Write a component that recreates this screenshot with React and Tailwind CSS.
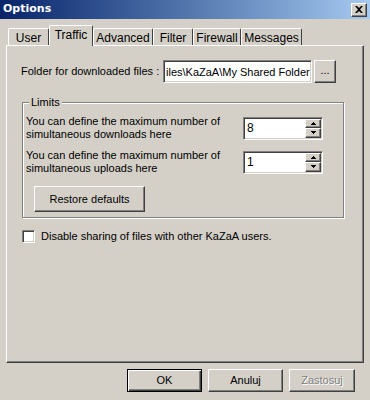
import { useState } from 'react';

const font = { fontFamily: '"Liberation Sans", Arial, sans-serif' };

// classic raised 3D border
const raised = 'border border-t-white border-l-white border-r-[#404040] border-b-[#404040] shadow-[inset_-1px_-1px_0_#808080,inset_1px_1px_0_#d4d0c8]';
const sunken = 'border border-t-[#808080] border-l-[#808080] border-r-white border-b-white shadow-[inset_1px_1px_0_#404040,inset_-1px_-1px_0_#d4d0c8]';

function Spinner({ value }) {
  return (
    <div className={`flex h-[23px] w-[80px] bg-white ${sunken}`}>
      <div className="flex-1 pl-[3px] pt-[2px] text-[12px] leading-[16px] text-black">{value}</div>
      <div className="flex flex-col py-[1px] pr-[1px]">
        <div className={`flex h-[10px] w-[16px] items-center justify-center bg-[#d4d0c8] ${raised}`}>
          <svg width="5" height="3" viewBox="0 0 5 3"><path d="M2 0h1v1h1v1h1v1H0V2h1V1h1z" fill="#000" /></svg>
        </div>
        <div className={`flex h-[10px] w-[16px] items-center justify-center bg-[#d4d0c8] ${raised}`}>
          <svg width="5" height="3" viewBox="0 0 5 3"><path d="M0 0h5v1H4v1H3v1H2V2H1V1H0z" fill="#000" /></svg>
        </div>
      </div>
    </div>
  );
}

export default function App() {
  const [tab, setTab] = useState('Traffic');
  const [noShare, setNoShare] = useState(false);
  const tabs = [
    { name: 'User', w: 'w-[41px]' },
    { name: 'Traffic', w: 'w-[44px]' },
    { name: 'Advanced', w: 'w-[60px]' },
    { name: 'Filter', w: 'w-[40px]' },
    { name: 'Firewall', w: 'w-[48px]' },
    { name: 'Messages', w: 'w-[61px]' },
  ];

  return (
    <div className="flex h-[400px] w-[370px] flex-col overflow-hidden whitespace-nowrap bg-[#d4d0c8] text-[11px] text-black" style={font}>
      {/* title bar */}
      <div className="flex h-[19px] items-center justify-between bg-gradient-to-r from-[#0a246a] to-[#a6caf0] pl-[3px] pr-[3px]">
        <span className="text-[12px] font-bold text-white" style={{ fontFamily: 'Tahoma, "DejaVu Sans", sans-serif', fontSize: 11 }}>Options</span>
        <div className={`flex h-[14px] w-[16px] items-center justify-center bg-[#d4d0c8] ${raised}`}>
          <svg width="8" height="7" viewBox="0 0 8 7"><path d="M0 0h2l2 2 2-2h2L5 3.5 8 7H6L4 5 2 7H0l3-3.5z" fill="#000" /></svg>
        </div>
      </div>

      {/* tabs */}
      <div className="ml-[8px] mt-[7px] flex h-[19px] items-end">
        {tabs.map(t => t.name === tab ? (
          <button key={t.name} onClick={() => setTab(t.name)}
            className={`relative z-10 -mb-[1px] h-[21px] ${t.w} rounded-t-[2px] border border-b-0 border-t-white border-l-white border-r-[#404040] bg-[#d4d0c8] pb-[3px] text-[12px] leading-[14px]`}>
            {t.name}
          </button>
        ) : (
          <button key={t.name} onClick={() => setTab(t.name)}
            className={`h-[17px] ${t.w} rounded-t-[2px] border border-b-0 border-t-white border-l-white border-r-[#404040] bg-[#d4d0c8] pt-[1px] text-[12px] leading-[14px]`}>
            {t.name}
          </button>
        ))}
      </div>

      {/* panel */}
      <div className="ml-[6px] flex h-[318px] w-[358px] flex-col border border-t-white border-l-white border-r-[#404040] border-b-[#404040] shadow-[inset_-1px_-1px_0_#808080] px-[14px] pt-[14px]">
        <div className="flex items-center">
          <span className="w-[142px] text-[11px]">Folder for downloaded files :</span>
          <div className={`h-[23px] w-[149px] overflow-hidden bg-white ${sunken}`}>
            <div className="pl-[2px] pt-[3px] text-[11px] leading-[16px]">iles\KaZaA\My Shared Folder</div>
          </div>
          <button className={`ml-[2px] h-[23px] w-[22px] bg-[#d4d0c8] pb-[2px] text-[11px] ${raised}`}>...</button>
        </div>

        {/* limits group */}
        <div className="relative ml-[1px] mt-[19px] w-[322px] border border-[#808080] pb-[5px] shadow-[1px_1px_0_white,inset_1px_1px_0_white]">
          <span className="absolute -top-[8px] left-[6px] bg-[#d4d0c8] px-[2px] text-[11px] leading-[14px]">Limits</span>
          <div className="flex flex-col gap-[8px] pl-[3px] pt-[12px]">
            <div className="flex items-center justify-between pr-[20px]">
              <div className="text-[11px] leading-[13px]">You can define the maximum number of<br />simultaneous downloads here</div>
              <Spinner value="8" />
            </div>
            <div className="flex items-center justify-between pr-[20px]">
              <div className="text-[11px] leading-[13px]">You can define the maximum number of<br />simultaneous uploads here</div>
              <Spinner value="1" />
            </div>
          </div>
          <button className={`ml-[11px] mt-[11px] h-[26px] w-[111px] bg-[#d4d0c8] text-[11px] ${raised}`}>Restore defaults</button>
        </div>

        <label className="ml-[1px] mt-[10px] flex cursor-pointer items-center gap-[6px]" onClick={() => setNoShare(v => !v)}>
          <span className={`flex h-[13px] w-[13px] items-center justify-center bg-white ${sunken}`}>
            {noShare && <svg width="7" height="7" viewBox="0 0 7 7"><path d="M0 2l2 2 5-5v2L2 6 0 4z" fill="#000" /></svg>}
          </span>
          <span className="text-[11px]">Disable sharing of files with other KaZaA users.</span>
        </label>
      </div>

      {/* bottom buttons */}
      <div className="mt-[6px] flex gap-[6px] pl-[127px]">
        <button className="h-[23px] w-[75px] border border-black bg-[#d4d0c8] text-[11px] shadow-[inset_1px_1px_0_white,inset_-1px_-1px_0_#404040,inset_-2px_-2px_0_#808080]">OK</button>
        <button className={`h-[23px] w-[75px] bg-[#d4d0c8] text-[11px] ${raised}`}>Anuluj</button>
        <button className={`h-[23px] w-[66px] bg-[#d4d0c8] text-[11px] text-[#808080] [text-shadow:1px_1px_0_white] ${raised}`}>Zastosuj</button>
      </div>
    </div>
  );
}
